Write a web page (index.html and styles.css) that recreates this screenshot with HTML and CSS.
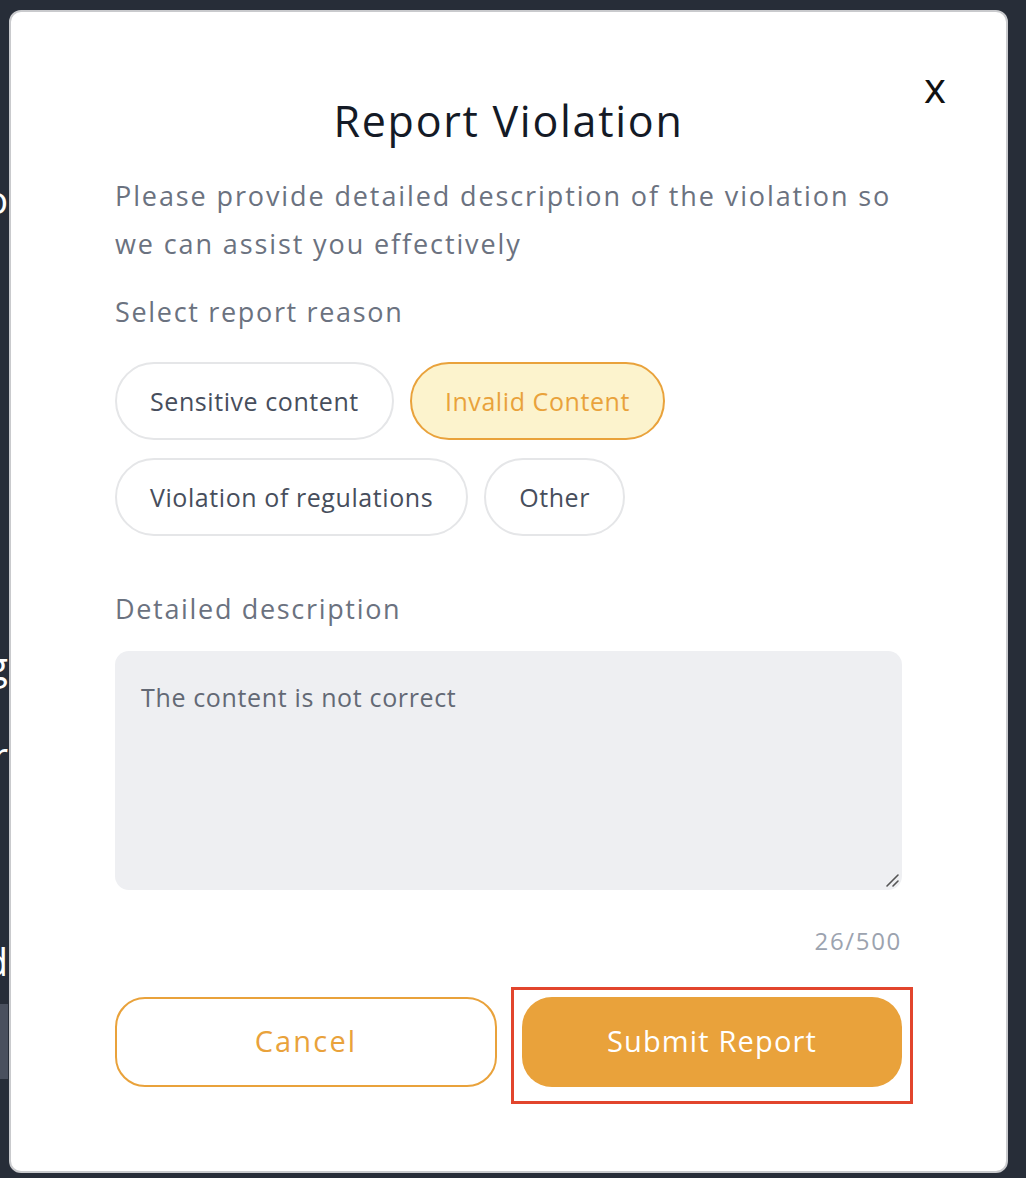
FILE: index.html
```html
<!DOCTYPE html>
<html lang="en">
<head>
<meta charset="utf-8">
<title>Report Violation</title>
<link rel="stylesheet" href="styles.css">
</head>
<body>
<div class="page">
  <div class="page-col">
    <div class="bg-line l1">Info</div>
    <div class="bg-line l2">Setting</div>
    <div class="bg-line l3">Other</div>
    <div class="bg-line l4">Word</div>
    <div class="bg-bar"></div>
  </div>
</div>

<div class="modal">
  <button class="close" type="button">x</button>
  <h1 class="title">Report Violation</h1>
  <p class="intro">Please provide detailed description of the violation so we can assist you effectively</p>
  <p class="label">Select report reason</p>
  <div class="chips">
    <span class="chip">Sensitive content</span>
    <span class="chip selected">Invalid Content</span>
    <span class="chip">Violation of regulations</span>
    <span class="chip">Other</span>
  </div>
  <p class="label desc-label">Detailed description</p>
  <div class="textarea">
    <span class="ta-text">The content is not correct</span>
    <svg class="grip" width="16" height="16" viewBox="0 0 16 16"><path d="M14 3 L3 14 M14 9 L9 14" stroke="#555" stroke-width="1.6" fill="none" stroke-linecap="round"/></svg>
  </div>
  <div class="counter">26/500</div>
  <div class="actions">
    <button class="btn cancel" type="button">Cancel</button>
    <div class="submit-wrap">
      <button class="btn submit" type="button">Submit Report</button>
      <span class="highlight"></span>
    </div>
  </div>
</div>
</body>
</html>
```

FILE: styles.css
```css
* { box-sizing: border-box; }
html, body { margin: 0; padding: 0; }
body {
  width: 1026px;
  height: 1178px;
  background: #272d38;
  font-family: "Open Sans", "Noto Sans", sans-serif;
  overflow: hidden;
  position: relative;
}
.page { padding-top: 176px; }
.page-col {
  width: 8px;
  display: flex;
  flex-direction: column;
  align-items: flex-end;
}
.bg-line {
  color: #fff;
  font-size: 38px;
  white-space: nowrap;
  line-height: 46px;
}
.l2 { margin-top: 420px; }
.l3 { margin-top: 44px; }
.l4 { margin-top: 160px; }
.bg-bar {
  width: 300px;
  height: 75px;
  background: #4a505e;
  margin-top: 20px;
}

.modal {
  position: absolute;
  left: 9px;
  top: 10px;
  width: 999px;
  height: 1163px;
  background: #fff;
  border: 2px solid #c9cacd;
  border-radius: 12px;
  padding: 64px 104px 0 104px;
}
.close {
  position: absolute;
  right: 60px;
  top: 50px;
  background: none;
  border: 0;
  padding: 0;
  font-family: "Open Sans", sans-serif;
  font-size: 42px;
  line-height: 50px;
  color: #111;
  cursor: pointer;
}
.title {
  margin: 0;
  text-align: center;
  font-weight: 400;
  font-size: 43px;
  line-height: 90px;
  color: #141a26;
  letter-spacing: 0.04em;
}
.intro {
  margin: 6px 0 0;
  font-size: 27px;
  line-height: 48px;
  color: #6b7280;
  letter-spacing: 0.07em;
}
.label {
  margin: 24px 0 0;
  font-size: 27px;
  line-height: 40px;
  color: #6b7280;
  letter-spacing: 0.062em;
}
.chips {
  display: flex;
  flex-wrap: wrap;
  gap: 18px 16px;
  margin-top: 30px;
  width: 600px;
}
.chip {
  height: 78px;
  border: 2px solid #e5e6e8;
  border-radius: 40px;
  padding: 0 33px;
  display: flex;
  align-items: center;
  font-size: 25px;
  color: #474e5c;
  letter-spacing: 0.023em;
}
.chip.selected {
  background: #fcf3cd;
  border-color: #e9a23b;
  color: #e9a23b;
}
.desc-label { margin-top: 53px; }
.textarea {
  position: relative;
  margin-top: 22px;
  height: 239px;
  background: #eeeff2;
  border-radius: 14px;
  padding: 28px 26px;
}
.ta-text {
  font-size: 25px;
  line-height: 36px;
  color: #636975;
  letter-spacing: 0.026em;
}
.grip {
  position: absolute;
  right: 2px;
  bottom: 2px;
}
.counter {
  text-align: right;
  margin-top: 34px;
  font-size: 24px;
  line-height: 34px;
  color: #9ca3af;
  letter-spacing: 0.07em;
}
.actions {
  display: flex;
  gap: 25px;
  margin-top: 39px;
}
.btn {
  height: 90px;
  border-radius: 30px;
  font-family: inherit;
  font-size: 29px;
  letter-spacing: 0.04em;
  line-height: 1;
  padding: 0 0 3px;
  cursor: pointer;
}
.cancel {
  width: 382px;
  background: #fff;
  border: 2px solid #e9a23b;
  color: #e9a23b;
  letter-spacing: 0.075em;
}
.submit-wrap {
  width: 380px;
  display: flex;
  position: relative;
}
.submit {
  width: 100%;
  background: #e9a23b;
  border: 0;
  color: #fff;
}
.highlight {
  position: absolute;
  left: -11px;
  top: -10px;
  right: -11px;
  bottom: -17px;
  border: 3px solid #e2452d;
  pointer-events: none;
}
```
